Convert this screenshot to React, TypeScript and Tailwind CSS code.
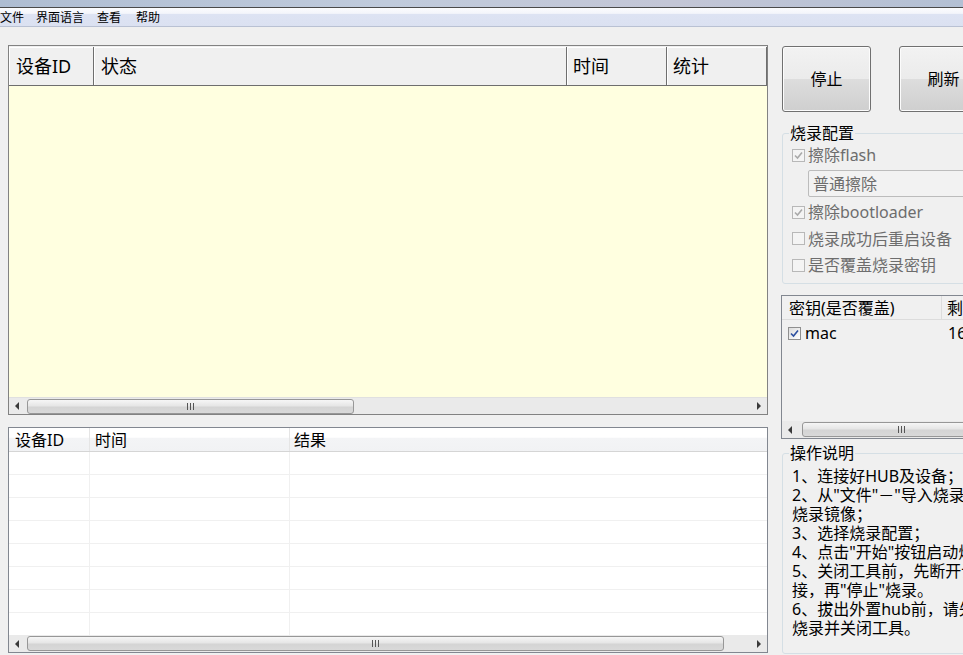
import React from "react";

const F = "font-['Noto_Sans','Noto_Sans_CJK_SC',sans-serif]";

function Arrow({ dir }: { dir: "l" | "r" }) {
  return (
    <div className="w-[17px] h-full flex items-center justify-center shrink-0">
      <svg width="5" height="8" viewBox="0 0 5 8">
        {dir === "l" ? <path d="M4 0 L0 4 L4 8 Z" fill="#3a3a3a" /> : <path d="M1 0 L5 4 L1 8 Z" fill="#3a3a3a" />}
      </svg>
    </div>
  );
}

function Thumb({ cls }: { cls: string }) {
  return (
    <div
      className={`${cls} h-[15px] my-[1px] rounded-[3px] border border-[#979797] bg-[linear-gradient(#f6f6f6,#e6e6e6_45%,#d4d4d4_55%,#d9d9d9)] flex items-center justify-center shrink-0`}
    >
      <svg width="8" height="7" viewBox="0 0 8 7">
        <rect x="0" y="0" width="1" height="7" fill="#555" />
        <rect x="3" y="0" width="1" height="7" fill="#555" />
        <rect x="6" y="0" width="1" height="7" fill="#555" />
      </svg>
    </div>
  );
}

function Check({ checked, disabled }: { checked?: boolean; disabled?: boolean }) {
  return (
    <div
      className={`w-[13px] h-[13px] border ${disabled ? "border-[#b8b8b8] bg-[#f4f4f4]" : "border-[#8f8f8f] bg-[linear-gradient(135deg,#dcdcdc,#ffffff)]"} flex items-center justify-center shrink-0`}
    >
      {checked && (
        <svg width="9" height="9" viewBox="0 0 9 9">
          <path d="M1 4.5 L3.5 7 L8 1.5" stroke={disabled ? "#a9a9a9" : "#2c4fa0"} strokeWidth="1.6" fill="none" />
        </svg>
      )}
    </div>
  );
}

export default function App() {
  const rows = Array.from({ length: 8 });
  return (
    <div className={`w-[963px] h-[655px] overflow-hidden bg-[#f0f0f0] flex flex-col ${F} text-black`}>
      {/* title strip */}
      <div className="h-[7px] bg-[linear-gradient(90deg,#aebdd2,#c0cbdc_40%,#c3c6d6_70%,#b3c0d4)] shrink-0" />
      <div className="h-[1px] bg-[#4a4a4a] shrink-0" />
      {/* menu */}
      <div className="h-[19px] shrink-0 bg-[linear-gradient(#fbfcfe,#f3f5fb_30%,#dde3f3_35%,#dbe1f1)] border-b border-[#b9c1d3] flex items-center text-[12px] leading-[12px] pt-[1px]">
        <span>文件</span>
        <span className="ml-[12px]">界面语言</span>
        <span className="ml-[13px]">查看</span>
        <span className="ml-[15px]">帮助</span>
      </div>

      <div className="flex flex-1 min-h-0">
        {/* left column */}
        <div className="ml-[8px] w-[760px] flex flex-col pt-[18px] shrink-0">
          {/* top table */}
          <div className="h-[370px] border border-[#828282] flex flex-col bg-[#ffffe0]">
            <div className="h-[40px] flex bg-[#f0f0f0] border-b border-[#6e6e6e] text-[18px] leading-[18px] shrink-0 pt-[1px]">
              <div className="w-[85px] border-r border-[#6e6e6e] shadow-[inset_1px_1px_0_#ffffff] flex items-center pl-[7px]">设备ID</div>
              <div className="w-[473px] border-r border-[#6e6e6e] shadow-[inset_1px_1px_0_#ffffff] flex items-center pl-[7px]">状态</div>
              <div className="w-[100px] border-r border-[#6e6e6e] shadow-[inset_1px_1px_0_#ffffff] flex items-center pl-[6px]">时间</div>
              <div className="w-[100px] border-r border-[#6e6e6e] shadow-[inset_1px_1px_0_#ffffff] flex items-center pl-[6px]">统计</div>
            </div>
            <div className="flex-1" />
            <div className="h-[17px] bg-[#eaeaea] border-t border-[#e0e0e0] flex shrink-0">
              <Arrow dir="l" />
              <Thumb cls="ml-[1px] w-[327px]" />
              <div className="flex-1" />
              <Arrow dir="r" />
            </div>
          </div>

          {/* bottom table */}
          <div className="mt-[12px] h-[226px] border border-[#828790] bg-white flex flex-col overflow-hidden">
            <div className="h-[24px] flex bg-[linear-gradient(#ffffff,#ffffff_40%,#f3f4f6_45%,#f1f2f4)] border-b border-[#d5d5d5] text-[16px] leading-[16px] shrink-0">
              <div className="w-[81px] border-r border-[#e5e5e5] flex items-center pl-[6px]">设备ID</div>
              <div className="w-[200px] border-r border-[#e5e5e5] flex items-center pl-[5px]">时间</div>
              <div className="flex-1 flex items-center pl-[4px]">结果</div>
            </div>
            <div className="flex-1 min-h-0 overflow-hidden">
              {rows.map((_, i) => (
                <div key={i} className="h-[23px] flex border-b border-[#f0f0f0]">
                  <div className="w-[81px] border-r border-[#f0f0f0]" />
                  <div className="w-[200px] border-r border-[#f0f0f0]" />
                  <div className="flex-1" />
                </div>
              ))}
            </div>
            <div className="h-[17px] bg-[#eaeaea] flex shrink-0">
              <Arrow dir="l" />
              <Thumb cls="ml-[1px] w-[697px]" />
              <div className="flex-1" />
              <Arrow dir="r" />
            </div>
          </div>
        </div>

        {/* right column */}
        <div className="ml-[13px] w-[200px] shrink-0 flex flex-col pt-[19px]">
          <div className="flex gap-[28px] pl-[1px]">
            {["停止", "刷新"].map((t) => (
              <div
                key={t}
                className="w-[89px] h-[66px] shrink-0 rounded-[3px] border border-[#707070] bg-[linear-gradient(#f2f2f2,#ebebeb_50%,#dddddd_50%,#cfcfcf)] shadow-[inset_0_0_0_1px_#fcfcfc] flex items-center justify-center text-[16px] leading-[16px]"
              >
                {t}
              </div>
            ))}
          </div>

          {/* group 烧录配置 */}
          <fieldset className="mt-[12px] ml-[1px] w-[200px] h-[160px] border border-[#d5dfe5] rounded-[3px] px-[0px] pb-[4px]">
            <legend className="ml-[6px] px-[1px] text-[16px] leading-[18px]">烧录配置</legend>
            <div className="flex flex-col text-[16px] leading-[16px] text-[#6d6d6d]">
              <div className="h-[26px] flex items-center pl-[9px] gap-[3px]">
                <Check checked disabled />
                <span>擦除flash</span>
              </div>
              <div className="ml-[25px] mt-[2px] h-[27px] border border-[#bcbcbc] rounded-[2px] bg-[#f2f2f2] flex items-center pl-[4px]">
                普通擦除
              </div>
              <div className="h-[26px] mt-[2px] flex items-center pl-[9px] gap-[3px]">
                <Check checked disabled />
                <span>擦除bootloader</span>
              </div>
              <div className="h-[27px] flex items-center pl-[9px] gap-[3px]">
                <Check disabled />
                <span>烧录成功后重启设备</span>
              </div>
              <div className="h-[26px] flex items-center pl-[9px] gap-[3px]">
                <Check disabled />
                <span>是否覆盖烧录密钥</span>
              </div>
            </div>
          </fieldset>

          {/* key list */}
          <div className="mt-[11px] h-[144px] w-[200px] border border-[#828790] flex flex-col bg-[#f0f0f0]">
            <div className="h-[24px] flex border-b border-[#dcdcdc] text-[16px] leading-[16px] shrink-0">
              <div className="w-[160px] border-r border-[#dcdcdc] flex items-center pl-[7px] whitespace-nowrap">密钥(是否覆盖)</div>
              <div className="flex-1 flex items-center pl-[5px]">剩余</div>
            </div>
            <div className="h-[26px] flex items-center text-[16px] leading-[16px] shrink-0">
              <div className="w-[160px] flex items-center pl-[6px] gap-[4px]">
                <Check checked />
                <span>mac</span>
              </div>
              <div className="pl-[6px]">16</div>
            </div>
            <div className="flex-1" />
            <div className="h-[17px] bg-[#eaeaea] flex shrink-0">
              <Arrow dir="l" />
              <Thumb cls="ml-[3px] w-[200px]" />
            </div>
          </div>

          {/* group 操作说明 */}
          <fieldset className="mt-[5px] ml-[1px] w-[200px] h-[210px] border border-[#d5dfe5] rounded-[3px] overflow-hidden">
            <legend className="ml-[6px] px-[1px] text-[16px] leading-[18px]">操作说明</legend>
            <div className="pl-[9px] pt-[5px] text-[16px] leading-[19px] whitespace-nowrap">
              <div>1、连接好HUB及设备；</div>
              <div>2、从"文件"－"导入烧录文件"导入</div>
              <div>烧录镜像；</div>
              <div>3、选择烧录配置；</div>
              <div>4、点击"开始"按钮启动烧录；</div>
              <div>5、关闭工具前，先断开设备连</div>
              <div>接，再"停止"烧录。</div>
              <div>6、拔出外置hub前，请先停止</div>
              <div>烧录并关闭工具。</div>
            </div>
          </fieldset>
        </div>
      </div>
    </div>
  );
}
